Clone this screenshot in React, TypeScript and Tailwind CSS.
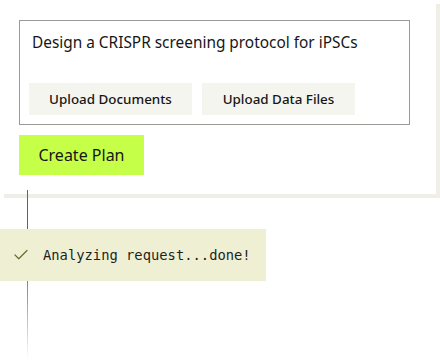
import { Check } from 'lucide-react';

export default function App() {
  return (
    <div className="w-[440px] h-[362px] bg-white overflow-hidden" style={{ fontFamily: '"Noto Sans", sans-serif' }}>
      <div className="w-[436px] bg-white pt-5 pb-[19px] pl-[19px] shadow-[4px_4px_0_0_#efefe8]">
        <div className="w-[391px] h-[105px] border border-[#9a9a96] flex flex-col">
          <p className="pl-3 pt-[10px] text-[15.4px] leading-6 text-[#161616]">
            Design a CRISPR screening protocol for iPSCs
          </p>
          <div className="mt-auto mb-[9px] ml-[9px] flex gap-[10px]">
            <button className="w-[163px] h-8 bg-[#f5f5f0] text-[13.4px] font-medium text-[#161616]">
              Upload Documents
            </button>
            <button className="w-[153px] h-8 bg-[#f5f5f0] text-[13.4px] font-medium text-[#161616]">
              Upload Data Files
            </button>
          </div>
        </div>
        <button className="mt-[10px] w-[125px] h-10 bg-[#c6ff47] text-[16px] text-[#161616]">
          Create Plan
        </button>
      </div>
      <div>
        <div className="-mt-1 ml-[27px] w-px h-[39px] bg-[#6b6a2c]" />
        <div className="w-[266px] h-[52px] bg-[#eff0d3] flex items-center">
          <Check className="ml-3 text-[#6b6a2c]" size={18} strokeWidth={1.6} />
          <span
            className="ml-[13px] text-[13.8px] text-[#1f1f1f]"
            style={{ fontFamily: '"DejaVu Sans Mono", monospace' }}
          >
            Analyzing request...done!
          </span>
        </div>
        <div className="ml-[27px] w-px h-[78px] bg-gradient-to-b from-[#8a8760] to-white" />
      </div>
    </div>
  );
}
